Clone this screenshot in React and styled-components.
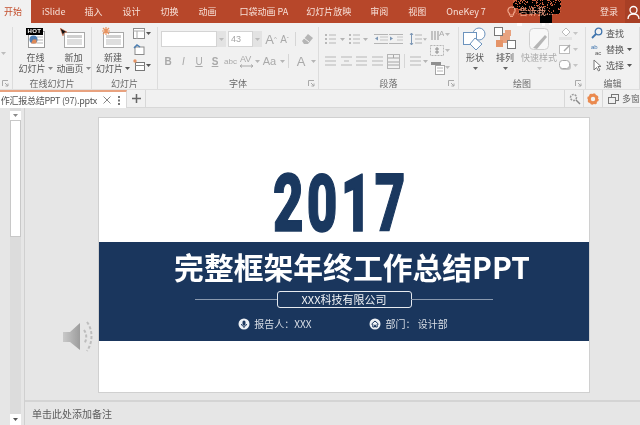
import React from "react";
import styled, { createGlobalStyle } from "styled-components";

const CJK = '"Noto Sans CJK SC", "Liberation Sans", sans-serif';
const Global = createGlobalStyle`
  html, body { margin: 0; padding: 0; width: 640px; height: 425px; overflow: hidden; background: #e6e6e6; }
  * { box-sizing: border-box; }
`;
const Page = styled.div`
  width: 640px; height: 425px; overflow: hidden; position: relative;
  display: flex; flex-direction: column; font-family: ${CJK}; filter: blur(0.35px);
`;
const TitleBar = styled.div`
  height: 23px; background: #b7472a; display: flex; align-items: center; position: relative; flex: none;
`;
const Tab = styled.div`
  height: 100%; display: flex; align-items: center; white-space: nowrap; font-size: 9px; color: #f7e0d8;
  padding: 0 ${p => p.$pr ?? 10}px 0 ${p => p.$pl ?? 10}px;
  ${p => p.$active && "background:#f1f1f1;color:#c4502f;padding:0 10px 0 4px;width:31px;"}
`;
const TitleSpacer = styled.div`flex: 1;`;
const TellMe = styled.div`
  display: flex; align-items: center; gap: 3px; font-size: 9px; color: #f0a58a; position: relative; z-index: 2; margin-left: 11px;
`;
const Login = styled.div`font-size: 9px; color: #f7e0d8; margin-right: 7px;`;
const User = styled.div`
  width: 15px; height: 23px; background: #a83f25; display: flex; align-items: center; padding-left: 2px;
`;
const NoiseLayer = styled.svg`position: absolute; left: 505px; top: 0; z-index: 1; pointer-events: none;`;

const Ribbon = styled.div`
  height: 66px; flex: none; background: #f1f1f1; display: flex; padding-top: 4px; color: #555;
`;
const Group = styled.div`
  width: ${p => p.$w}px; flex: none; position: relative; display: flex; flex-direction: column;
  border-right: 1px solid #dcdcdc;
`;
const GroupBody = styled.div`
  flex: 1; display: flex; min-height: 0;
  padding-left: ${p => p.$pl ?? 0}px;
`;
const GroupLabel = styled.div`
  height: 10px; line-height: 10px; text-align: center; font-size: 9px; color: #6a6a6a; flex: none;
`;
const Launcher = styled.svg`position: absolute; right: 3px; bottom: 2px;`;
const Big = styled.div`
  width: ${p => p.$w}px; flex: none; display: flex; flex-direction: column; align-items: center; position: relative;
  font-size: 9px; color: ${p => (p.$off ? "#ababab" : "#555")}; white-space: nowrap;
`;
const BigIcon = styled.div`height: 24px; flex: none; display: flex; align-items: flex-start; justify-content: center; margin-bottom: 1px;`;
const BigLine = styled.div`
  height: 11px; line-height: 11px; flex: none; display: flex; align-items: center; gap: 2px;
`;
const Col = styled.div`
  width: ${p => p.$w}px; flex: none; display: flex; flex-direction: column; margin-top: ${p => p.$pt ?? 0}px;
`;
const Row = styled.div`
  display: flex; align-items: center; flex: none; height: ${p => p.$h ?? 16}px; margin-left: ${p => p.$ml ?? 0}px; margin-top: ${p => p.$mt ?? 0}px;
`;
const Cell = styled.div`
  width: ${p => p.$w ?? 16}px; flex: none; display: flex; align-items: center; justify-content: center;
  margin-left: ${p => p.$ml ?? 0}px;
  font-family: "Liberation Sans", sans-serif; font-size: ${p => p.$fs ?? 10}px; font-weight: ${p => p.$fw ?? 400};
  font-style: ${p => p.$it ? "italic" : "normal"}; text-decoration: ${p => p.$u ? "underline" : "none"};
  color: ${p => p.$c ?? "#a9a9a9"};
`;
const Field = styled.div`
  width: ${p => p.$w}px; height: 16px; background: #fff; border: 1px solid #d4d4d4; flex: none;
  font: 9px "Liberation Sans", sans-serif; color: #a6a6a6; display: flex; align-items: center; padding-left: 2px;
`;
const Drop = styled.div`
  width: 9px; height: 16px; background: #e3e3e3; flex: none; display: flex; align-items: center; justify-content: center; margin-right: ${p => p.$mr ?? 0}px;
`;
const Sep = styled.div`width: 1px; height: 14px; background: #d6d6d6; flex: none; margin: 0 ${p => p.$m ?? 5}px;`;
const EditLine = styled.div`
  display: flex; align-items: center; height: 16px; gap: 3px; font-size: 9px; color: #555; white-space: nowrap; padding-left: 5px;
`;
const Hot = styled.div`
  position: absolute; left: 10px; top: 1px; width: 17px; height: 7px; background: #000; color: #fff;
  font: bold 6px/7px "Liberation Sans", sans-serif; text-align: center; letter-spacing: 0.4px;
`;
const Pointer = styled.svg`position: absolute; left: 5px; top: 1px;`;

const Strip = styled.div`
  height: 19px; flex: none; background: #f1f1f1; display: flex; border-top: 1px solid #dedede;
  border-bottom: 1px solid #d8d8d8;
`;
const DocTab = styled.div`
  width: 127px; background: #fff; border-top: 2px solid #e8a27f; display: flex; align-items: center;
  overflow: hidden; white-space: nowrap; font-size: 9px; color: #555; flex: none; border-right: 1px solid #d8d8d8;
  justify-content: flex-end; padding-right: 6px; height: 18px;
  svg { flex: none; }
`;
const DocName = styled.span`flex: none; letter-spacing: -0.25px; margin-right: 6px;`;
const DocDots = styled.svg`margin-left: 7px;`;
const StripCell = styled.div`
  width: ${p => p.$w}px; flex: ${p => p.$grow ? 1 : "none"}; border-right: 1px solid ${p => p.$noline ? "transparent" : "#d8d8d8"};
  display: flex; align-items: center; justify-content: ${p => p.$left ? "flex-start" : "center"}; color: #666;
  font-size: 9px; gap: 3px; white-space: nowrap; overflow: hidden; padding-left: ${p => p.$pl ?? 0}px;
  svg { flex: none; }
`;

const Work = styled.div`flex: 1; display: flex; background: #e6e6e6; min-height: 0;`;
const ScrollCol = styled.div`
  width: 11px; margin-left: 10px; margin-right: 3px; flex: none; background: #dcdcdc; display: flex; flex-direction: column; padding-top: 3px;
`;
const ScrollBtn = styled.div`
  height: ${p => p.$h}px; background: #fff; flex: none; display: flex; align-items: center; justify-content: center;
`;
const Thumb = styled.div`height: 117px; background: #fff; border: 1px solid #c8c8c8; flex: none;`;
const ScrollGap = styled.div`flex: 1;`;
const Canvas = styled.div`
  flex: 1; display: flex; flex-direction: column; border-left: 1px solid #d0d0d0; position: relative;
`;
const SlideArea = styled.div`height: 294px; flex: none; padding: 9px 0 0 73px; border-bottom: 2px solid #d4d4d4;`;
const Notes = styled.div`
  flex: 1; padding-left: 7px; font-size: 10px; color: #5c5c5c; display: flex; align-items: center;
`;
const Slide = styled.div`
  width: 492px; height: 276px; background: #fff; border: 1px solid #d0d0d0; display: flex; flex-direction: column;
`;
const Head = styled.div`height: 124px; flex: none; display: flex; align-items: flex-start; justify-content: center; padding: 56px 7px 0 0;`;
const Year = styled.div`
  font-family: "Roboto", sans-serif; font-weight: 900; font-size: 80px; line-height: 60px; color: #1a385f; letter-spacing: 5px;
  transform: scaleX(0.66); -webkit-text-stroke: 1.5px #1a385f;
`;
const Band = styled.div`
  height: 99px; flex: none; background: #1a365d; display: flex; flex-direction: column; align-items: center; color: #fff;
`;
const Title = styled.div`
  font-size: 29.8px; line-height: 34px; font-weight: 700; margin-top: 7px; padding-left: 16px; white-space: nowrap;
  font-family: "Noto Sans CJK SC", sans-serif;
`;
const CompanyRow = styled.div`
  display: flex; align-items: center; width: 298px; margin-top: 8px;
`;
const Rule = styled.div`flex: 1; height: 1px; background: #8a99ae;`;
const Company = styled.div`
  width: 135px; height: 17px; border: 1.5px solid #e6eaf0; border-radius: 3px; font-size: 11px; line-height: 14px; text-align: center; color: #f2f4f7; flex: none; margin: 0 -1px;
`;
const Meta = styled.div`
  display: flex; align-items: center; font-size: 10px; margin-top: 8px; color: #d9dee6; padding-right: 2px;
`;
const MetaItem = styled.div`
  display: flex; align-items: center; gap: 4px; margin-right: ${p => p.$mr ?? 0}px; white-space: nowrap;
`;
const Speaker = styled.svg`position: absolute; left: 37px; top: 213px;`;

const Caret = ({ c = "#8a8a8a" }) => (
  <svg width="5" height="3" viewBox="0 0 5 3"><path d="M0 0h5L2.5 3z" fill={c} /></svg>
);
const CaretCell = ({ w = 8 }) => <Cell $w={w}><Caret c="#b5b5b5" /></Cell>;

const SlideGlyph = ({ spark }) => (
  <svg width="24" height="22" viewBox="0 0 24 22">
    <rect x="2.5" y="5.5" width="20" height="15" fill="#fff" stroke="#a8a8a8" />
    <rect x="5" y="8" width="15" height="3" fill="#cfcfcf" />
    <rect x="5" y="12" width="15" height="6" fill="#dedede" />
    {spark && (
      <g stroke="#e9935f" strokeWidth="1.2">
        <path d="M5 0v8M1 4h8M2 1l6 6M8 1L2 7" />
      </g>
    )}
  </svg>
);
const OnlineGlyph = () => (
  <svg width="24" height="22" viewBox="0 0 24 22">
    <rect x="4.5" y="4.5" width="16" height="16" fill="#fff" stroke="#9a9a9a" />
    <path d="M13 10h6M13 13h6M13 16h6" stroke="#b5b5b5" />
    <circle cx="9.5" cy="12.5" r="4" fill="#4f7fb5" />
    <path d="M9 12.5h3.500v4H7z" fill="#e08a56" />
  </svg>
);
const Lines = ({ w = 14, h = 12, dots, gap = 4, n = 3, c = "#b8b8b8", indent }) => (
  <svg width={w} height={h} viewBox={`0 0 ${w} ${h}`}>
    {Array.from({ length: n }, (_, i) => (
      <g key={i}>
        {dots && <rect x="0" y={1 + i * gap} width="2" height="2" fill={c} />}
        <rect x={dots ? 4 : indent && i === 1 ? 3 : 0} y={1.500 + i * gap} width={dots ? w - 4 : indent && i === 1 ? w - 6 : w} height="1" fill={c} />
      </g>
    ))}
  </svg>
);
const Indent = ({ flip }) => (
  <svg width="14" height="12" viewBox="0 0 14 12">
    <path d="M0 1.500h14M0 10.500h14" stroke="#b5b5b5" />
    <path d={flip ? "M8 4h6M8 7h6" : "M6 4h8M6 7h8"} stroke="#c5c5c5" />
    <path d={flip ? "M1 3.500v4l3-2z" : "M4 3.500v4l-3-2z"} fill="#7c97b5" />
  </svg>
);
const Launch = () => (
  <Launcher width="7" height="7" viewBox="0 0 7 7"><path d="M0.500 6V.5H6M3 3l3 3M6 3.500V6H3.500" fill="none" stroke="#a9a9a9" /></Launcher>
);
const seeded = () => {
  let s = 17;
  return () => (s = (s * 16807) % 2147483647) / 2147483647;
};
const Noise = () => {
  const r = seeded();
  const dots = [];
  for (let i = 0; i < 170; i++) {
    const x = 8 + Math.floor(r() * 48);
    const y = Math.floor(Math.pow(r(), 1.5) * 15);
    dots.push(<rect key={i} x={x} y={y} width="1" height="1" fill="#c9603f" />);
  }
  return (
    <NoiseLayer width="62" height="30" viewBox="0 0 62 30">
      <rect x="8" y="0" width="48" height="9" fill="#000" />
      <rect x="14" y="9" width="41" height="5" fill="#000" />
      <rect x="35" y="14" width="12" height="9" fill="#000" />
      {dots}
      <rect x="12" y="23" width="5" height="3" fill="#fff" />
      <rect x="37" y="23" width="3" height="3" fill="#fff" />
      <rect x="44" y="23" width="3" height="2" fill="#fff" />
    </NoiseLayer>
  );
};

export default function App() {
  return (
    <Page>
      <Global />
      <TitleBar>
        <Tab $active>开始</Tab>
        <Tab $pl={11} $pr={9}>iSlide</Tab>
        <Tab>插入</Tab>
        <Tab>设计</Tab>
        <Tab>切换</Tab>
        <Tab>动画</Tab>
        <Tab $pl={13} $pr={8}>口袋动画 PA</Tab>
        <Tab $pr={9}>幻灯片放映</Tab>
        <Tab>审阅</Tab>
        <Tab>视图</Tab>
        <Tab>OneKey 7</Tab>
        <Noise />
        <TellMe>
          <svg width="9" height="12" viewBox="0 0 9 12"><path d="M4.500 1a3.500 3.500 0 0 1 2 6.400V9h-4V7.400A3.500 3.500 0 0 1 4.500 1zM3 10.500h3" fill="none" stroke="#f0a58a" strokeWidth="1.200" /></svg>
          告诉我...
        </TellMe>
        <TitleSpacer />
        <Login>登录</Login>
        <User>
          <svg width="13" height="14" viewBox="0 0 13 14"><circle cx="6.500" cy="5" r="3.500" fill="none" stroke="#fff" strokeWidth="1.300" /><path d="M1 14c0-3 2-5 5.500-5s5.500 2 5.500 5" fill="none" stroke="#fff" strokeWidth="1.300" /></svg>
        </User>
      </TitleBar>

      <Ribbon>
        <Group $w={13}>
          <GroupBody><Cell $w={6}><Caret c="#bdbdbd" /></Cell></GroupBody>
          <GroupLabel />
          <Launch />
        </Group>
        <Group $w={79}>
          <GroupBody $pl={3}>
            <Big $w={39}>
              <BigIcon><OnlineGlyph /></BigIcon>
              <BigLine>在线</BigLine>
              <BigLine>幻灯片 <Caret /></BigLine>
              <Hot>HOT</Hot>
            </Big>
            <Big $w={37}>
              <BigIcon><SlideGlyph /></BigIcon>
              <BigLine>新加</BigLine>
              <BigLine>动画页 <Caret /></BigLine>
              <Pointer width="9" height="9" viewBox="0 0 9 9"><path d="M0 0l7 4-3 1-1 3z" fill="#111" stroke="#e5825a" strokeWidth=".6" /></Pointer>
            </Big>
          </GroupBody>
          <GroupLabel>在线幻灯片</GroupLabel>
        </Group>
        <Group $w={66}>
          <GroupBody $pl={2}>
            <Big $w={38}>
              <BigIcon><SlideGlyph spark /></BigIcon>
              <BigLine>新建</BigLine>
              <BigLine>幻灯片 <Caret c="#555" /></BigLine>
            </Big>
            <Col $w={22} $pt={-2}>
              <Row><Cell $w={14}><svg width="12" height="11" viewBox="0 0 12 11"><rect x=".5" y=".5" width="11" height="10" fill="#fff" stroke="#8b8b8b" /><path d="M0 3h12M4 3v8" stroke="#aaa" /></svg></Cell><Caret c="#555" /></Row>
              <Row><Cell $w={14}><svg width="12" height="11" viewBox="0 0 12 11"><rect x="2" y="3" width="9" height="7.500" fill="#fff" stroke="#8b8b8b" /><path d="M1 4l3-3 3 2" fill="none" stroke="#4c7fb3" strokeWidth="1.500" /></svg></Cell></Row>
              <Row><Cell $w={14}><svg width="12" height="12" viewBox="0 0 12 12"><rect x="2.500" y="3.500" width="9" height="8" fill="#fff" stroke="#777" /><path d="M2 6.500h10" stroke="#888" /><circle cx="2" cy="2" r="1.700" fill="#e49364" /></svg></Cell><Caret c="#555" /></Row>
            </Col>
          </GroupBody>
          <GroupLabel>幻灯片</GroupLabel>
        </Group>
        <Group $w={161}>
          <GroupBody>
            <Col $w={160} $pt={4}>
              <Row $ml={3}>
                <Field $w={56} />
                <Drop $mr={2}><Caret c="#bbb" /></Drop>
                <Field $w={25}>43</Field>
                <Drop $mr={2}><Caret c="#bbb" /></Drop>
                <Cell $w={14} $fs={13}>A<sup style={{ fontSize: 6 }}>^</sup></Cell>
                <Cell $w={13} $fs={10}>A<sup style={{ fontSize: 6 }}>ˇ</sup></Cell>
                <Sep $m={4} />
                <Cell $w={14}><svg width="13" height="12" viewBox="0 0 13 12"><path d="M1 8l6-7 5 4-5 6H3z" fill="#b5b5b5" /><path d="M3 5l5 4" stroke="#f1f1f1" /></svg></Cell>
              </Row>
              <Row $ml={2} $mt={5} $h={18}>
                <Cell $w={16} $fw={700}>B</Cell>
                <Cell $w={15} $it>I</Cell>
                <Cell $w={16} $u>U</Cell>
                <Cell $w={16} $u $fw={700}>S</Cell>
                <Cell $w={15} $fs={8}>abc</Cell>
                <Cell $w={17} $fs={9}><svg width="15" height="16" viewBox="0 0 15 16"><text x="1" y="9" fontSize="9" fontFamily="Liberation Sans" fill="#a9a9a9">AV</text><path d="M1 13h13M1 13l2-1.500M1 13l2 1.500M14 13l-2-1.500M14 13l-2 1.500" stroke="#a9a9a9" fill="none" /></svg></Cell>
                <CaretCell w={5} />
                <Cell $w={19} $fs={11}>Aa</Cell>
                <CaretCell w={6} />
                <Sep $m={3} />
                <Cell $w={18} $fs={13}>A</Cell>
                <CaretCell w={7} />
              </Row>
            </Col>
          </GroupBody>
          <GroupLabel>字体</GroupLabel>
          <Launch />
        </Group>
        <Group $w={140}>
          <GroupBody $pl={5}>
            <Col $w={105} $pt={4}>
              <Row $h={16}>
                <Cell $w={13}><Lines dots w={11} /></Cell>
                <CaretCell w={10} />
                <Cell $w={14}><Lines dots w={11} /></Cell>
                <CaretCell w={8} />
                <Cell $w={14} $ml={5}><Indent /></Cell>
                <Cell $w={14} $ml={1}><Indent flip /></Cell>
                <Cell $w={16} $ml={4}><svg width="13" height="14" viewBox="0 0 13 14"><path d="M2.500 1v12M1 3l1.500-2L4 3M1 11l1.500 2L4 11" fill="none" stroke="#7c97b5" /><path d="M6 3h7M6 7h7M6 11h7" stroke="#b5b5b5" /></svg></Cell>
                <CaretCell w={4} />
              </Row>
              <Row $mt={5} $h={18}>
                <Cell $w={12}><Lines w={11} /></Cell>
                <Cell $w={12} $ml={4}><Lines w={11} indent /></Cell>
                <Cell $w={12} $ml={3}><Lines w={11} /></Cell>
                <Cell $w={12} $ml={4}><Lines w={11} /></Cell>
                <Cell $w={14} $ml={3}><svg width="13" height="15" viewBox="0 0 13 15"><rect x=".5" y=".5" width="12" height="14" fill="none" stroke="#b5b5b5" /><path d="M1 4h11M1 8h11M1 11h11M6.500 1v3" stroke="#a5a5a5" /></svg></Cell>
                <Sep $m={4} />
                <Cell $w={12}><Lines w={11} /></Cell>
                <CaretCell w={8} />
              </Row>
            </Col>
            <Col $w={24} $pt={-1}>
              <Row $h={16}><Cell $w={16}><svg width="13" height="13" viewBox="0 0 13 13"><path d="M1 3v9M4 3v9M7 3v9" stroke="#a9a9a9" strokeWidth="1.300" /><text x="8" y="8" fontSize="8" fontFamily="Liberation Sans" fill="#a9a9a9">A</text></svg></Cell><Caret c="#bbb" /></Row>
              <Row $h={17}><Cell $w={16}><svg width="14" height="13" viewBox="0 0 14 13"><rect x=".5" y="1.500" width="13" height="10" fill="none" stroke="#b5b5b5" strokeDasharray="2 1" /><path d="M7 3v7M5 5h4M5 8h4" stroke="#8c8c8c" /></svg></Cell><Caret c="#bbb" /></Row>
              <Row $h={17}><Cell $w={16}><svg width="15" height="14" viewBox="0 0 15 14"><path d="M1 1h10v3H1z" fill="#8f8f8f" /><rect x="5.500" y="4.500" width="9" height="9" fill="#fff" stroke="#a5a5a5" /><path d="M7 7h6M7 10h6" stroke="#b5b5b5" /></svg></Cell><Caret c="#bbb" /></Row>
            </Col>
          </GroupBody>
          <GroupLabel>段落</GroupLabel>
          <Launch />
        </Group>
        <Group $w={127}>
          <GroupBody $pl={1}>
            <Big $w={30}>
              <BigIcon>
                <svg width="24" height="24" viewBox="0 0 24 24"><circle cx="16" cy="7" r="6" fill="#fff" stroke="#6c93bd" /><rect x=".5" y="5.500" width="13" height="12" fill="#fff" stroke="#6c93bd" /><path d="M12 11l7 6-6 6-6-6z" fill="#fff" stroke="#6c93bd" /></svg>
              </BigIcon>
              <BigLine>形状</BigLine>
              <BigLine><Caret c="#666" /></BigLine>
            </Big>
            <Big $w={30}>
              <BigIcon>
                <svg width="22" height="22" viewBox="0 0 22 22"><rect x="6" y="6" width="10" height="10" fill="#e8a27f" /><rect x="11" y="3" width="6" height="6" fill="#e8a27f" /><rect x="2" y="13" width="7" height="7" fill="#e59468" /><rect x=".5" y=".5" width="8" height="8" fill="#fff" stroke="#777" /><rect x="13.500" y="13.500" width="8" height="8" fill="#fff" stroke="#777" /></svg>
              </BigIcon>
              <BigLine>排列</BigLine>
              <BigLine><Caret c="#666" /></BigLine>
            </Big>
            <Big $w={38} $off>
              <BigIcon>
                <svg width="24" height="24" viewBox="0 0 24 24"><rect x="2.500" y="1.500" width="19" height="21" rx="4" fill="#f7f7f7" stroke="#cfcfcf" /><path d="M6 21l12-13 2 2-10 12z" fill="#b5b5b5" /></svg>
              </BigIcon>
              <BigLine>快速样式</BigLine>
              <BigLine><Caret c="#c5c5c5" /></BigLine>
            </Big>
            <Col $w={24} $pt={-2}>
              <Row><Cell $w={15}><svg width="13" height="13" viewBox="0 0 13 13"><path d="M3 5l4-4 4 4-4 4z" fill="#fff" stroke="#bbb" /><rect x="0" y="10" width="13" height="3" fill="#e4e4e4" /></svg></Cell><Caret c="#c5c5c5" /></Row>
              <Row><Cell $w={15}><svg width="13" height="13" viewBox="0 0 13 13"><rect x=".5" y="2.500" width="10" height="8" fill="#fff" stroke="#bbb" /><path d="M5 8l6-6" stroke="#aaa" strokeWidth="1.500" /></svg></Cell><Caret c="#c5c5c5" /></Row>
              <Row><Cell $w={15}><svg width="13" height="13" viewBox="0 0 13 13"><rect x="1" y="3" width="11" height="8" rx="3" fill="#c5c5c5" /><rect x=".5" y="1.500" width="10" height="8" rx="3" fill="#fff" stroke="#aaa" /></svg></Cell><Caret c="#c5c5c5" /></Row>
            </Col>
          </GroupBody>
          <GroupLabel>绘图</GroupLabel>
          <Launch />
        </Group>
        <Group $w={54}>
          <GroupBody>
            <Col $w={53} $pt={-2}>
              <EditLine><svg width="12" height="12" viewBox="0 0 12 12"><circle cx="7.500" cy="4.500" r="3.300" fill="none" stroke="#3f74ad" strokeWidth="1.300" /><path d="M5 7l-4 4" stroke="#3f74ad" strokeWidth="1.800" /></svg>查找</EditLine>
              <EditLine><svg width="12" height="12" viewBox="0 0 12 12"><text x="0" y="6" fontSize="6" fontFamily="Liberation Sans" fill="#3f74ad">ab</text><text x="4" y="12" fontSize="6" fontFamily="Liberation Sans" fill="#555">ac</text></svg>替换 <Caret c="#555" /></EditLine>
              <EditLine><svg width="12" height="13" viewBox="0 0 12 13"><path d="M3 1v10l2.500-2.500L7.500 12l1.500-1-2-3.500h3z" fill="#fff" stroke="#777" /></svg>选择<Caret c="#555" /></EditLine>
            </Col>
          </GroupBody>
          <GroupLabel>编辑</GroupLabel>
        </Group>
      </Ribbon>

      <Strip>
        <DocTab>
          <DocName>作汇报总结PPT (97).pptx</DocName>
          <svg width="8" height="8" viewBox="0 0 8 8"><path d="M.5.5l7 7M7.500.5l-7 7" stroke="#888" /></svg>
          <DocDots width="2" height="9" viewBox="0 0 2 9"><path d="M0 0h2v2H0zM0 3.500h2v2H0zM0 7h2v2H0z" fill="#777" /></DocDots>
        </DocTab>
        <StripCell $w={19}>
          <svg width="9" height="9" viewBox="0 0 9 9"><path d="M4.500 0v9M0 4.500h9" stroke="#666" strokeWidth="1.500" /></svg>
        </StripCell>
        <StripCell $grow />
        <StripCell $w={19}>
          <svg width="13" height="13" viewBox="0 0 13 13"><circle cx="5.500" cy="5.500" r="3" fill="none" stroke="#999" strokeWidth="1.400" strokeDasharray="2 1" /><path d="M8 8l4 4" stroke="#888" strokeWidth="1.500" /></svg>
        </StripCell>
        <StripCell $w={19}>
          <svg width="12" height="12" viewBox="0 0 12 12"><circle cx="6" cy="6" r="3.700" fill="none" stroke="#ea8a4f" strokeWidth="3" /><circle cx="6" cy="6" r="5" fill="none" stroke="#ea8a4f" strokeWidth="1.500" strokeDasharray="2 1.900" /></svg>
        </StripCell>
        <StripCell $w={37} $left $noline $pl={5}>
          <svg width="11" height="10" viewBox="0 0 11 10"><rect x="3.500" y=".5" width="7" height="6" fill="none" stroke="#777" /><rect x=".5" y="3.500" width="7" height="6" fill="#f1f1f1" stroke="#777" /></svg>
          多窗
        </StripCell>
      </Strip>

      <Work>
        <ScrollCol>
          <ScrollBtn $h={9}><Caret /></ScrollBtn>
          <Thumb />
          <ScrollGap />
          <ScrollBtn $h={11}><Caret c="#555" /></ScrollBtn>
        </ScrollCol>
        <Canvas>
          <SlideArea>
            <Slide>
              <Head><Year>2017</Year></Head>
              <Band>
                <Title>完整框架年终工作总结PPT</Title>
                <CompanyRow>
                  <Rule />
                  <Company>XXX科技有限公司</Company>
                  <Rule />
                </CompanyRow>
                <Meta>
                  <MetaItem $mr={58}>
                    <svg width="12" height="12" viewBox="0 0 12 12"><circle cx="6" cy="6" r="5.500" fill="#eef1f5" /><rect x="4.500" y="2.500" width="3" height="5" rx="1.500" fill="#1a365d" /><path d="M3.500 6c0 3 5 3 5 0M6 8.500V10" fill="none" stroke="#1a365d" /></svg>
                    报告人：XXX
                  </MetaItem>
                  <MetaItem>
                    <svg width="12" height="12" viewBox="0 0 12 12"><circle cx="6" cy="6" r="5.500" fill="#eef1f5" /><path d="M2.500 6.200L6 3l3.500 3.200M3.800 6v3h1.700V7.200h1V9h1.700V6" fill="none" stroke="#1a365d" /></svg>
                    部门： 设计部
                  </MetaItem>
                </Meta>
              </Band>
            </Slide>
          </SlideArea>
          <Speaker width="34" height="32" viewBox="0 0 34 32">
            <defs>
              <linearGradient id="spk" x1="0" x2="1"><stop offset="0" stopColor="#c9c9c9" /><stop offset="1" stopColor="#9c9c9c" /></linearGradient>
            </defs>
            <path d="M1 11h7l10-9v27L8 21H1z" fill="url(#spk)" />
            <g stroke="#bdbdbd" strokeWidth="2" fill="none" strokeDasharray="3 2">
              <path d="M22 9c3 4 3 10 0 14" />
              <path d="M25 1c6 8 6 20 0 29" />
            </g>
          </Speaker>
          <Notes>单击此处添加备注</Notes>
        </Canvas>
      </Work>
    </Page>
  );
}
